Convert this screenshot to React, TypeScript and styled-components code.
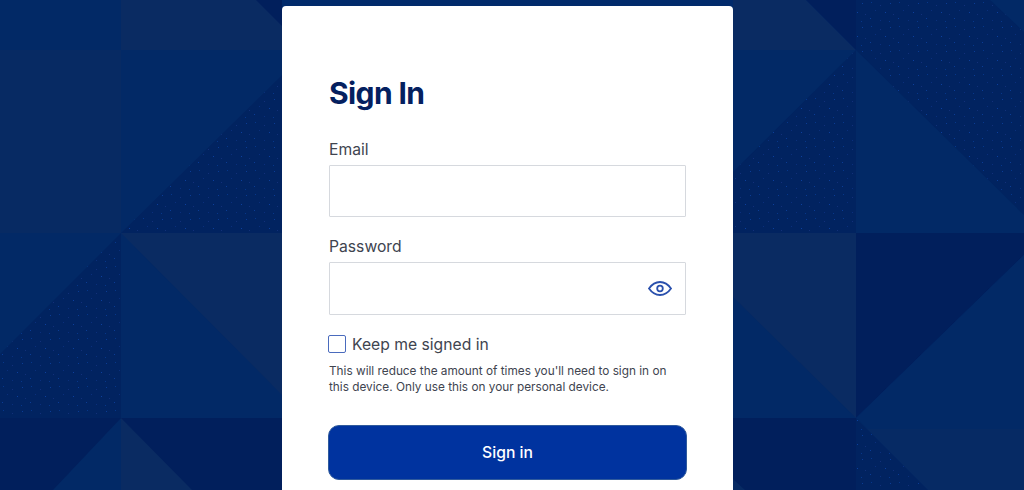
import React from "react";
import styled, { createGlobalStyle } from "styled-components";

const Global = createGlobalStyle`
  html, body { margin: 0; padding: 0; height: 100%; background: #012a6b; }
  body { font-family: Inter, "Liberation Sans", sans-serif; overflow: hidden; }
  * { box-sizing: border-box; }
`;

const Page = styled.main`
  position: relative;
  width: 1024px;
  height: 490px;
  overflow: hidden;
  display: flex;
  justify-content: center;
  align-items: flex-start;
  padding: 6px 9px 0 0;
`;

const Backdrop = styled.svg`
  position: absolute;
  inset: 0;
  width: 1024px;
  height: 490px;
`;

const Card = styled.section`
  position: relative;
  width: 451px;
  height: 520px;
  flex: none;
  background: #fff;
  border-radius: 4px 4px 0 0;
  padding: 68px 47px 0 47px;
  display: flex;
  flex-direction: column;
`;

const Title = styled.h1`
  margin: 0 0 28px;
  font-size: 30px;
  line-height: 38px;
  font-weight: 700;
  letter-spacing: -0.6px;
  color: #04205f;
`;

const Field = styled.div`
  display: flex;
  flex-direction: column;
  margin-bottom: 20px;
`;

const Label = styled.label`
  font-size: 15.7px;
  line-height: 20px;
  color: #40444f;
  margin-bottom: 5px;
`;

const InputWrap = styled.div<{ $height: number }>`
  position: relative;
  height: ${(p) => p.$height}px;
`;

const Input = styled.input`
  display: block;
  width: 100%;
  height: 100%;
  border: 1px solid #d6d9de;
  border-radius: 1px;
  background: #fff;
  outline: none;
`;

const Reveal = styled.button`
  position: absolute;
  right: 14px;
  top: 19px;
  width: 24px;
  height: 15px;
  padding: 0;
  border: 0;
  background: none;
  display: flex;
`;

const CheckRow = styled.label`
  display: flex;
  align-items: center;
  gap: 6px;
  margin: 0 0 0 -1px;
  height: 18px;
  font-size: 15.7px;
  color: #40444f;
`;

const Box = styled.input.attrs({ type: "checkbox" })`
  appearance: none;
  margin: 0;
  width: 18px;
  height: 18px;
  flex: none;
  border: 1.5px solid #4a6bbd;
  border-radius: 2px;
  background: #fff;
`;

const Hint = styled.p`
  margin: 10px 0 0;
  font-size: 11.8px;
  line-height: 16px;
  color: #40444f;
  max-width: 345px;
`;

const Submit = styled.button`
  margin: 30px 0 0 -1px;
  width: 359px;
  height: 55px;
  flex: none;
  border: 1px solid #2f5a9c;
  border-radius: 11px;
  background: #00339f;
  color: #fff;
  font-family: inherit;
  font-size: 15.7px;
  font-weight: 500;
`;

const A = "#022966";
const B = "#0a2b62";
const C = "#072a63";
const D = "#011f5c";
const Dots = "url(#dots)";

const shapes: [string, string][] = [
  ["0,0 121,0 121,50 0,50", A],
  ["121,0 282,0 282,50 121,50", B],
  ["256,0 282,0 282,26", D],
  ["0,50 121,50 121,233 0,233", C],
  ["121,50 282,50 282,233 121,233", A],
  ["121,233 282,75 282,233", Dots],
  ["0,233 121,233 121,418 0,418", A],
  ["121,233 0,354 0,418 121,418", Dots],
  ["121,233 282,233 282,418 121,418", A],
  ["121,233 282,233 282,395", B],
  ["0,418 282,418 282,490 0,490", D],
  ["121,418 53,490 121,490", A],
  ["121,418 121,490 192,490", B],
  ["733,0 806,0 856,50 733,50", B],
  ["806,0 856,0 856,50", D],
  ["856,0 1024,0 1024,233 856,233", Dots],
  ["990,0 1024,0 1024,32", A],
  ["733,50 856,50 856,233 733,233", Dots],
  ["733,50 856,50 733,172", A],
  ["856,50 1024,215 1024,233 856,233", A],
  ["733,233 856,233 856,418 733,418", A],
  ["733,233 856,233 856,418 733,297", B],
  ["856,233 1024,233 1024,255 856,418", D],
  ["1024,255 1024,418 856,418", A],
  ["733,418 856,418 856,490 733,490", D],
  ["733,479 733,490 745,490", C],
  ["856,418 1024,418 1024,490 928,490", "#062a64"],
  ["856,418 1024,418 1024,429 868,429", A],
  ["856,418 928,490 856,490", Dots],
];

function Background() {
  return (
    <Backdrop viewBox="0 0 1024 490" aria-hidden="true">
      <defs>
        <pattern id="dots" width="28" height="24" patternUnits="userSpaceOnUse">
          <rect width="28" height="24" fill="#012360" />
          <rect x="3" y="2" width="1" height="1" fill="#06378a" />
          <rect x="12" y="5" width="1" height="1" fill="#12307a" />
          <rect x="22" y="3" width="1" height="1" fill="#0a3c94" />
          <rect x="7" y="10" width="1" height="1" fill="#0a2f7c" />
          <rect x="17" y="12" width="1" height="1" fill="#0c3f9c" />
          <rect x="25" y="14" width="1" height="1" fill="#12307a" />
          <rect x="2" y="18" width="1" height="1" fill="#0a3c94" />
          <rect x="12" y="20" width="1" height="1" fill="#0a2f7c" />
          <rect x="21" y="21" width="1" height="1" fill="#06378a" />
        </pattern>
      </defs>
      {shapes.map(([points, fill]) => (
        <polygon key={points} points={points} fill={fill} />
      ))}
    </Backdrop>
  );
}

function EyeIcon() {
  return (
    <svg width="24" height="15" viewBox="0 0 24 15" fill="none" stroke="#2a50ad" strokeWidth="1.8">
      <path d="M1 7.5C4 3.2 8 1 12 1s8 2.200 11 6.500C20 11.800 16 14 12 14S4 11.800 1 7.500Z" />
      <circle cx="12" cy="7.500" r="2.800" />
    </svg>
  );
}

export default function App() {
  return (
    <Page>
      <Global />
      <Background />
      <Card>
        <Title>Sign In</Title>
        <Field>
          <Label htmlFor="email">Email</Label>
          <InputWrap $height={52}>
            <Input id="email" type="email" />
          </InputWrap>
        </Field>
        <Field>
          <Label htmlFor="password">Password</Label>
          <InputWrap $height={53}>
            <Input id="password" type="password" />
            <Reveal type="button" aria-label="Show password">
              <EyeIcon />
            </Reveal>
          </InputWrap>
        </Field>
        <CheckRow>
          <Box />
          Keep me signed in
        </CheckRow>
        <Hint>
          This will reduce the amount of times you'll need to sign in on this device. Only use this on your personal device.
        </Hint>
        <Submit type="button">Sign in</Submit>
      </Card>
    </Page>
  );
}
